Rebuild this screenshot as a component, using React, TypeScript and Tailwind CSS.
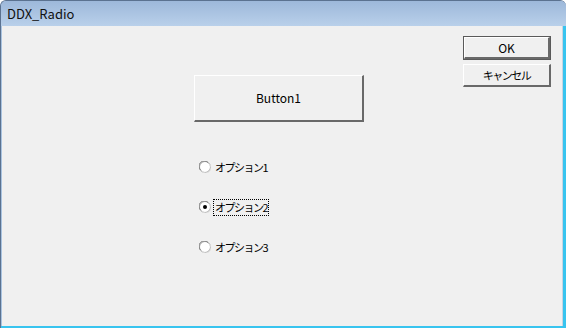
import React from 'react';

const font = { fontFamily: '"Noto Sans CJK JP", "Liberation Sans", sans-serif' };

function Radio({ checked }: { checked?: boolean }) {
    return (
        <svg width="12" height="12" viewBox="0 0 12 12" className="shrink-0">
            <circle cx="6" cy="6" r="5.5" fill="#ffffff" stroke="#a0a0a0" />
            <path d="M1.5 9 A5 5 0 0 1 9 1.5" fill="none" stroke="#808080" strokeWidth="1" />
            <path d="M10.5 3 A5 5 0 0 1 3 10.5" fill="none" stroke="#e3e3e3" strokeWidth="1" />
            {checked && <circle cx="6" cy="6" r="2" fill="#000000" />}
        </svg>
    );
}

function Btn({ label, isDefault, className, jp }: { label: string; isDefault?: boolean; className: string; jp?: boolean }) {
    const inner = (
        <div className={`flex h-full w-full items-center justify-center border-t border-l border-t-white border-l-white border-r-2 border-b-2 border-r-[#696969] border-b-[#696969] bg-[#f0f0f0] text-black ${jp ? 'text-[11px] tracking-[-1.5px]' : 'text-[12px]'}`}>
            {label}
        </div>
    );
    return (
        <div className={className}>
            {isDefault ? <div className="h-full w-full border border-[#5a5a5a]">{inner}</div> : inner}
        </div>
    );
}

export default function App() {
    const options = ['オプション1', 'オプション2', 'オプション3'];
    return (
        <div className="flex h-[328px] w-[566px] flex-col overflow-hidden rounded-t-[6px] border-l border-t border-[#5b7290] bg-[#a9c3e0]" style={font}>
            <div className="flex h-[25px] items-center bg-gradient-to-b from-[#9db8da] to-[#b9d0ea] pl-[6px] text-[13px] text-[#111]">
                DDX_Radio
            </div>
            <div className="flex flex-1 border-r-[3px] border-b-[2px] border-[#38c4ef] pl-[1px]">
                <div className="flex flex-1 border-r border-[#c8d4e2] bg-[#f0f0f0]">
                    <div className="ml-[192px] mt-[49px] flex w-[170px] flex-col">
                        <Btn label="Button1" className="h-[47px] w-[170px]" />
                        <div className="mt-[36px] flex flex-col gap-[22px] pl-[5px] text-[11px] tracking-[-1.5px] text-black">
                            {options.map((o, i) => (
                                <div key={o} className="flex h-[18px] items-center gap-[2px]">
                                    <Radio checked={i === 1} />
                                    <span className={i === 1 ? 'border border-dotted border-black px-[1px] leading-[15px]' : 'border border-transparent px-[1px] leading-[15px]'}>{o}</span>
                                </div>
                            ))}
                        </div>
                    </div>
                    <div className="ml-auto mr-[11px] mt-[10px] flex flex-col gap-[4px]">
                        <Btn label="OK" isDefault className="h-[24px] w-[88px]" />
                        <Btn label="キャンセル" jp className="h-[23px] w-[88px]" />
                    </div>
                </div>
            </div>
        </div>
    );
}
